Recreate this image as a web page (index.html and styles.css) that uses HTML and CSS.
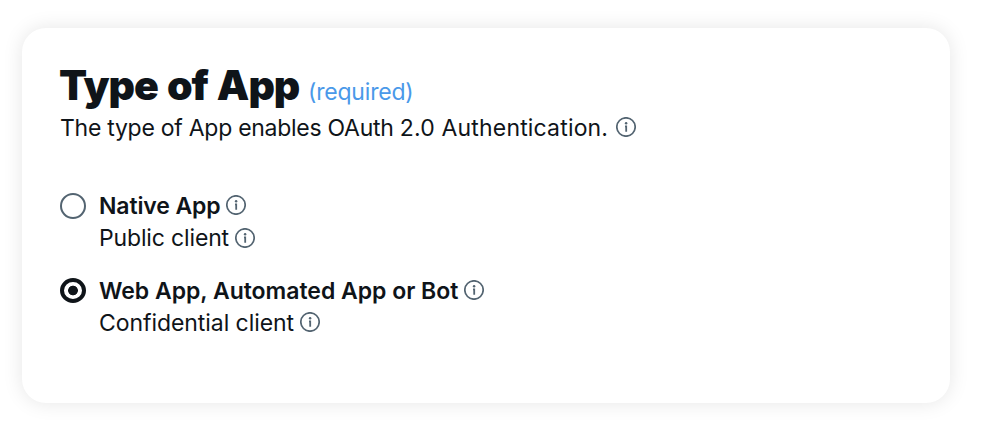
FILE: index.html
```html
<!DOCTYPE html>
<html lang="en">
<head>
<meta charset="utf-8">
<title>Type of App</title>
<link rel="stylesheet" href="styles.css">
</head>
<body>
<svg class="defs" width="0" height="0"><symbol id="info" viewBox="0 0 20 20"><circle cx="10" cy="10" r="9.2" fill="none" stroke="currentColor" stroke-width="1.7"/><circle cx="10.1" cy="6.2" r="1.25" fill="currentColor"/><path d="M9 9.3h1.2v5.4" fill="none" stroke="currentColor" stroke-width="1.8"/></symbol></svg>
<main class="card">
<header>
<h1><span class="title">Type of App</span><span class="required">(required)</span></h1>
<p class="line intro"><span class="t1">The type of App enables OAuth <span class="wide">2.0 Authentication.</span></span><svg class="info"><use href="#info"/></svg></p>
</header>
<div class="options">
<div class="option">
<span class="radio"></span>
<div><p class="line name"><span class="t2">Native App</span><svg class="info"><use href="#info"/></svg></p>
<p class="line"><span class="t3">Public client</span><svg class="info low"><use href="#info"/></svg></p></div>
</div>
<div class="option">
<span class="radio checked"></span>
<div><p class="line name"><span class="t4">Web App, Automated App or Bot</span><svg class="info"><use href="#info"/></svg></p>
<p class="line"><span class="t5">Confidential client</span><svg class="info"><use href="#info"/></svg></p></div>
</div>
</div>
</main>
</body>
</html>
```
FILE: styles.css
```css
* { box-sizing: border-box; }
body { margin: 0; padding: 28px 36px 41px 22px; height: 444px; background: #fff; font-family: Inter, sans-serif; color: #0f1419; }
.defs { position: absolute; }
.card { height: 375px; padding: 31px 38px; border-radius: 24px; background: #fff; box-shadow: 0 0 20px rgba(0,0,0,.1); }
h1, p { margin: 0; }
h1 { display: flex; align-items: baseline; height: 53px; line-height: 52px; }
.title { width: 249px; margin-left: -1px; font-size: 41px; font-weight: 900; letter-spacing: -1.05px; word-spacing: 2px; white-space: nowrap; }
.required { color: #4a99e9; font-size: 23px; font-weight: 400; letter-spacing: -.2px; }
.line { display: flex; align-items: center; height: 32px; font-size: 23px; line-height: 32px; white-space: nowrap; }
.name { font-weight: 600; letter-spacing: -.05px; }
.info { width: 20px; height: 20px; flex: none; margin-bottom: 2px; color: #536471; overflow: visible; }
.low { margin-bottom: 0; }
.t1 { width: 556px; letter-spacing: -.27px; }
.wide { letter-spacing: .17px; }
.t2 { width: 127px; letter-spacing: -.12px; }
.t3 { width: 136px; letter-spacing: -.15px; }
.t4 { width: 365px; letter-spacing: -.02px; }
.t5 { width: 201px; letter-spacing: -.06px; }
.options { display: grid; gap: 21px; margin-top: 46px; }
.option { display: flex; gap: 13px; }
.radio { width: 26px; height: 26px; margin-top: 3px; border: 2px solid #536471; border-radius: 50%; }
.checked { height: 25px; border: 4px solid #0f1419; background: radial-gradient(circle, #0f1419 4.5px, transparent 5.2px); }
```
